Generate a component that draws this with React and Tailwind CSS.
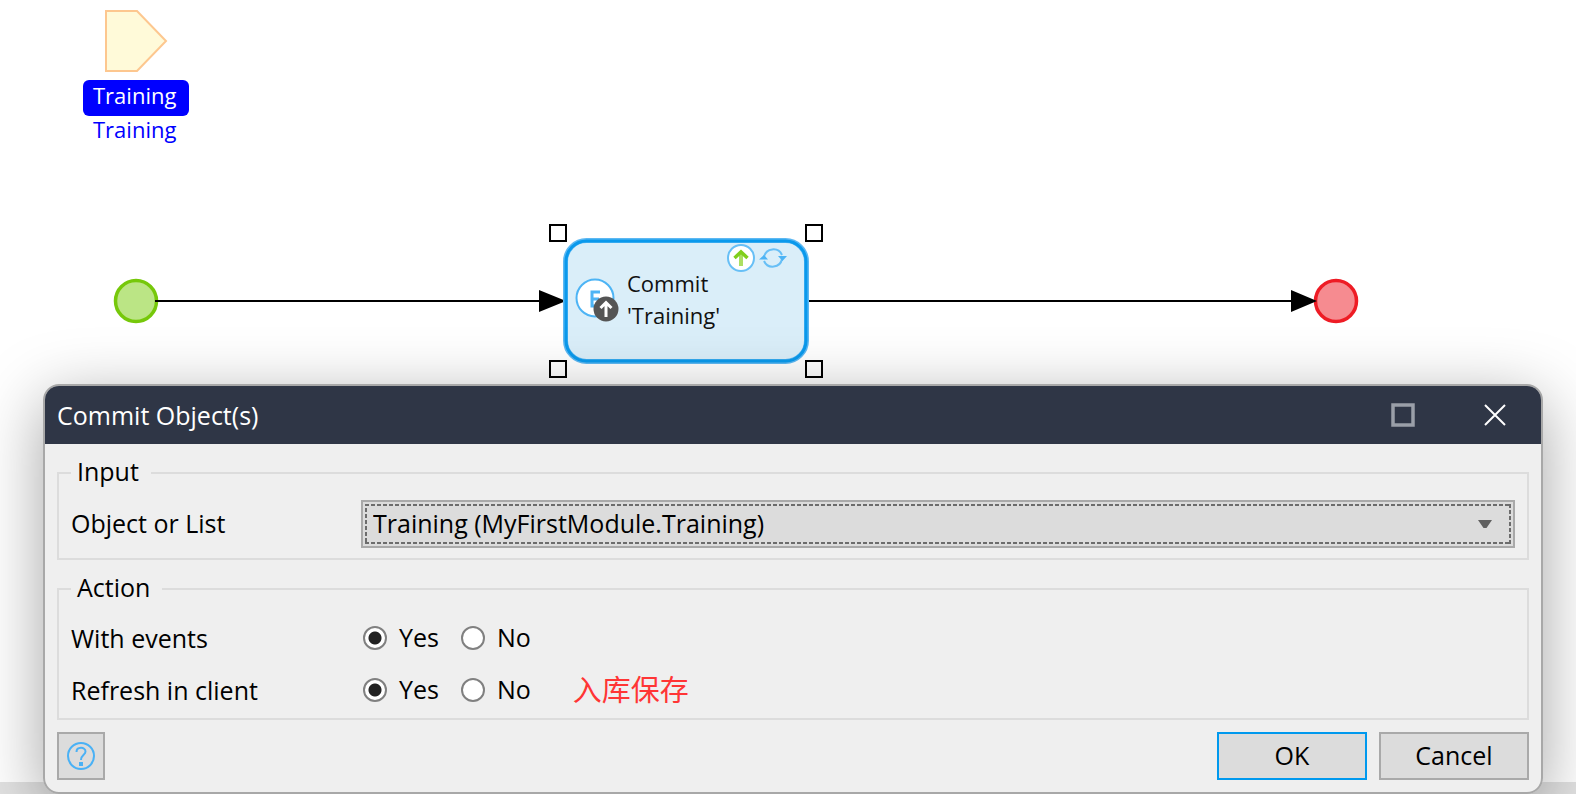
import React from "react";

const uiFont = "font-['Open_Sans','Noto_Sans_CJK_SC',sans-serif]";

function Handle({ className }) {
  return <span className={`absolute size-[18px] border-2 border-black bg-white ${className}`} />;
}

function Canvas() {
  return (
    <section aria-label="Microflow" className="absolute inset-0 text-[22px] leading-8">
      <svg width="1400" height="384" className="absolute left-0 top-0" aria-hidden="true">
        <path d="M106 11H137L166 41L137 71H106Z" fill="#fffad9" stroke="#fdc78f" strokeWidth="2" />
        <circle cx="136" cy="301" r="20.5" fill="#bbe585" stroke="#76c80a" strokeWidth="3.5" />
        <circle cx="1336" cy="301" r="20.5" fill="#f68b90" stroke="#ee1c25" strokeWidth="3.5" />
        <path d="M155 301H545M808 301H1295" stroke="#000" strokeWidth="2" />
        <path d="M539 290L566 301L539 312ZM1291 290L1317 301L1291 312Z" fill="#000" />
      </svg>

      <div className="absolute left-[83px] top-[80px] flex h-9 w-[106px] items-center rounded-md bg-[#0000ff] px-2.5 pb-1.5 text-white">
        Training
      </div>
      <div className="absolute left-[93px] top-[113px] text-[#0000ff]">Training</div>

      <svg width="246" height="126" className="absolute left-[563px] top-[238px]" aria-hidden="true">
        <rect x="2.5" y="2.5" width="241" height="121" rx="21" fill="#daeef9" stroke="#5db8f2" strokeWidth="5" />
        <rect x="3" y="3" width="240" height="120" rx="20.5" fill="none" stroke="#0a99ec" strokeWidth="3" />
        <circle cx="32" cy="60" r="18.5" fill="#fff" stroke="#4db4f5" strokeWidth="2" />
        <path d="M37 54H29V68H37M29 61H36" fill="none" stroke="#4db4f5" strokeWidth="3" />
        <circle cx="43" cy="71" r="12.5" fill="#555" />
        <path d="M43 79V65M37.5 70L43 64.5L48.5 70" fill="none" stroke="#fff" strokeWidth="3" />
        <circle cx="178" cy="20" r="13" fill="#fff" stroke="#67bff6" strokeWidth="2" />
        <path d="M178 28V16" stroke="#abdf63" strokeWidth="4" />
        <path d="M171.5 20L178 14L184.5 20" fill="none" stroke="#80cf1c" strokeWidth="3.5" />
        <path d="M201 19A9.500 9.500 0 0 1 219 17M219 21A9.500 9.500 0 0 1 201 23" fill="none" stroke="#67bff6" strokeWidth="2" />
        <path d="M196 21.5L201 17L205 21.5ZM215 18L219.5 23L224 18Z" fill="#4db4f5" />
      </svg>
      <div className="absolute left-[627px] top-[267px] text-[#111]">
        <p>Commit</p>
        <p>'Training'</p>
      </div>
      <Handle className="left-[549px] top-[224px]" />
      <Handle className="left-[805px] top-[224px]" />
      <Handle className="left-[549px] top-[360px]" />
      <Handle className="left-[805px] top-[360px]" />
    </section>
  );
}

function Radio({ name, label, defaultChecked }) {
  return (
    <label className="flex items-center gap-3">
      <input
        type="radio"
        name={name}
        defaultChecked={defaultChecked}
        className="size-6 appearance-none rounded-full border-2 border-[#808080] bg-white checked:bg-[radial-gradient(circle,#222_0_6px,#fff_7px)]"
      />
      <span className="pb-0.5">{label}</span>
    </label>
  );
}

function RadioRow({ name, label, children }) {
  return (
    <div role="radiogroup" aria-label={label} className="flex h-[52px] items-center">
      <span className="w-[292px] shrink-0">{label}</span>
      <div className="flex items-center gap-[22px]">
        <Radio name={name} label="Yes" defaultChecked />
        <Radio name={name} label="No" />
      </div>
      {children}
    </div>
  );
}

function Group({ title, className, children }) {
  return (
    <fieldset className={`border-2 border-[#dcdcdc] px-3 ${className}`}>
      <legend className="h-[34px] pl-1.5 pr-3 leading-[30px]">{title}</legend>
      {children}
    </fieldset>
  );
}

function CommitDialog() {
  return (
    <div
      role="dialog"
      aria-labelledby="dialog-title"
      className="absolute left-[43px] right-[33px] top-[384px] overflow-hidden rounded-[16px] border-2 border-[#a8a8a8] bg-[#efefef] text-[25px] leading-8 text-black"
    >
      <header className="flex h-[58px] items-center bg-[#2f3646] pl-3 pr-[34px] text-white">
        <h1 id="dialog-title" className="flex-1">Commit Object(s)</h1>
        <button type="button" aria-label="Maximize" className="mr-[68px]">
          <svg width="24" height="24" className="block"><rect x="2" y="2" width="20" height="20" fill="none" stroke="#9a9fa8" strokeWidth="3.5" /></svg>
        </button>
        <button type="button" aria-label="Close">
          <svg width="24" height="24" className="block"><path d="M2 2L22 22M22 2L2 22" stroke="#fff" strokeWidth="2" /></svg>
        </button>
      </header>

      <form className="flex flex-col gap-3 p-3" onSubmit={(e) => e.preventDefault()}>
        <Group title="Input" className="pb-2.5">
          <div className="flex items-center pt-2.5">
            <label htmlFor="object" className="w-[290px] shrink-0 pb-0.5">Object or List</label>
            <div className="relative flex-1">
              <select id="object" className="block h-12 w-full appearance-none border-2 border-[#a9a9a9] bg-[#dcdcdc] pb-0.5 pl-2.5 pr-12 outline-none">
                <option>Training (MyFirstModule.Training)</option>
              </select>
              <svg className="pointer-events-none absolute left-1 top-1 h-10 w-[calc(100%-8px)]" aria-hidden="true">
                <rect width="100%" height="100%" fill="none" stroke="#6c6c6c" strokeWidth="4" strokeDasharray="4 2" />
              </svg>
              <svg width="14" height="9" className="pointer-events-none absolute right-[23px] top-5" aria-hidden="true">
                <path d="M0 0H14L8.5 8H5.5Z" fill="#606060" />
              </svg>
            </div>
          </div>
        </Group>

        <Group title="Action" className="pb-0.5">
          <div className="pt-1.5">
            <RadioRow name="events" label="With events" />
            <RadioRow name="refresh" label="Refresh in client">
              <span className="ml-[42px] text-[29px] text-[#ff3535]">入库保存</span>
            </RadioRow>
          </div>
        </Group>

        <div className="flex gap-3">
          <button type="button" aria-label="Help" className="mr-auto flex size-12 items-center justify-center border-2 border-[#a9a9a9] bg-[#dcdcdc]">
            <svg width="28" height="28" fill="none" stroke="#4ab1f5">
              <circle cx="14" cy="14" r="13" strokeWidth="2" />
              <path d="M9.5 10C9.5 4.5 18.5 4.5 18.5 9.5C18.5 13 14 12.5 14 18" strokeWidth="2" />
              <path d="M14 20V24" strokeWidth="4" />
            </svg>
          </button>
          <button type="submit" className="h-12 w-[150px] border-2 border-[#0099ee] bg-[#dcdcdc] pb-0.5">OK</button>
          <button type="button" className="h-12 w-[150px] border-2 border-[#a9a9a9] bg-[#dcdcdc] pb-0.5">Cancel</button>
        </div>
      </form>
    </div>
  );
}

export default function App() {
  return (
    <main className={`relative min-h-screen overflow-hidden bg-white ${uiFont}`}>
      <Canvas />
      <div className="absolute inset-x-0 bottom-0 h-3 bg-[#e2e2e2]" />
      <div className="absolute left-[43px] right-[33px] top-[384px] h-[410px] rounded-[16px] shadow-[0_16px_66px_rgba(0,0,0,0.36)]" />
      <CommitDialog />
    </main>
  );
}
